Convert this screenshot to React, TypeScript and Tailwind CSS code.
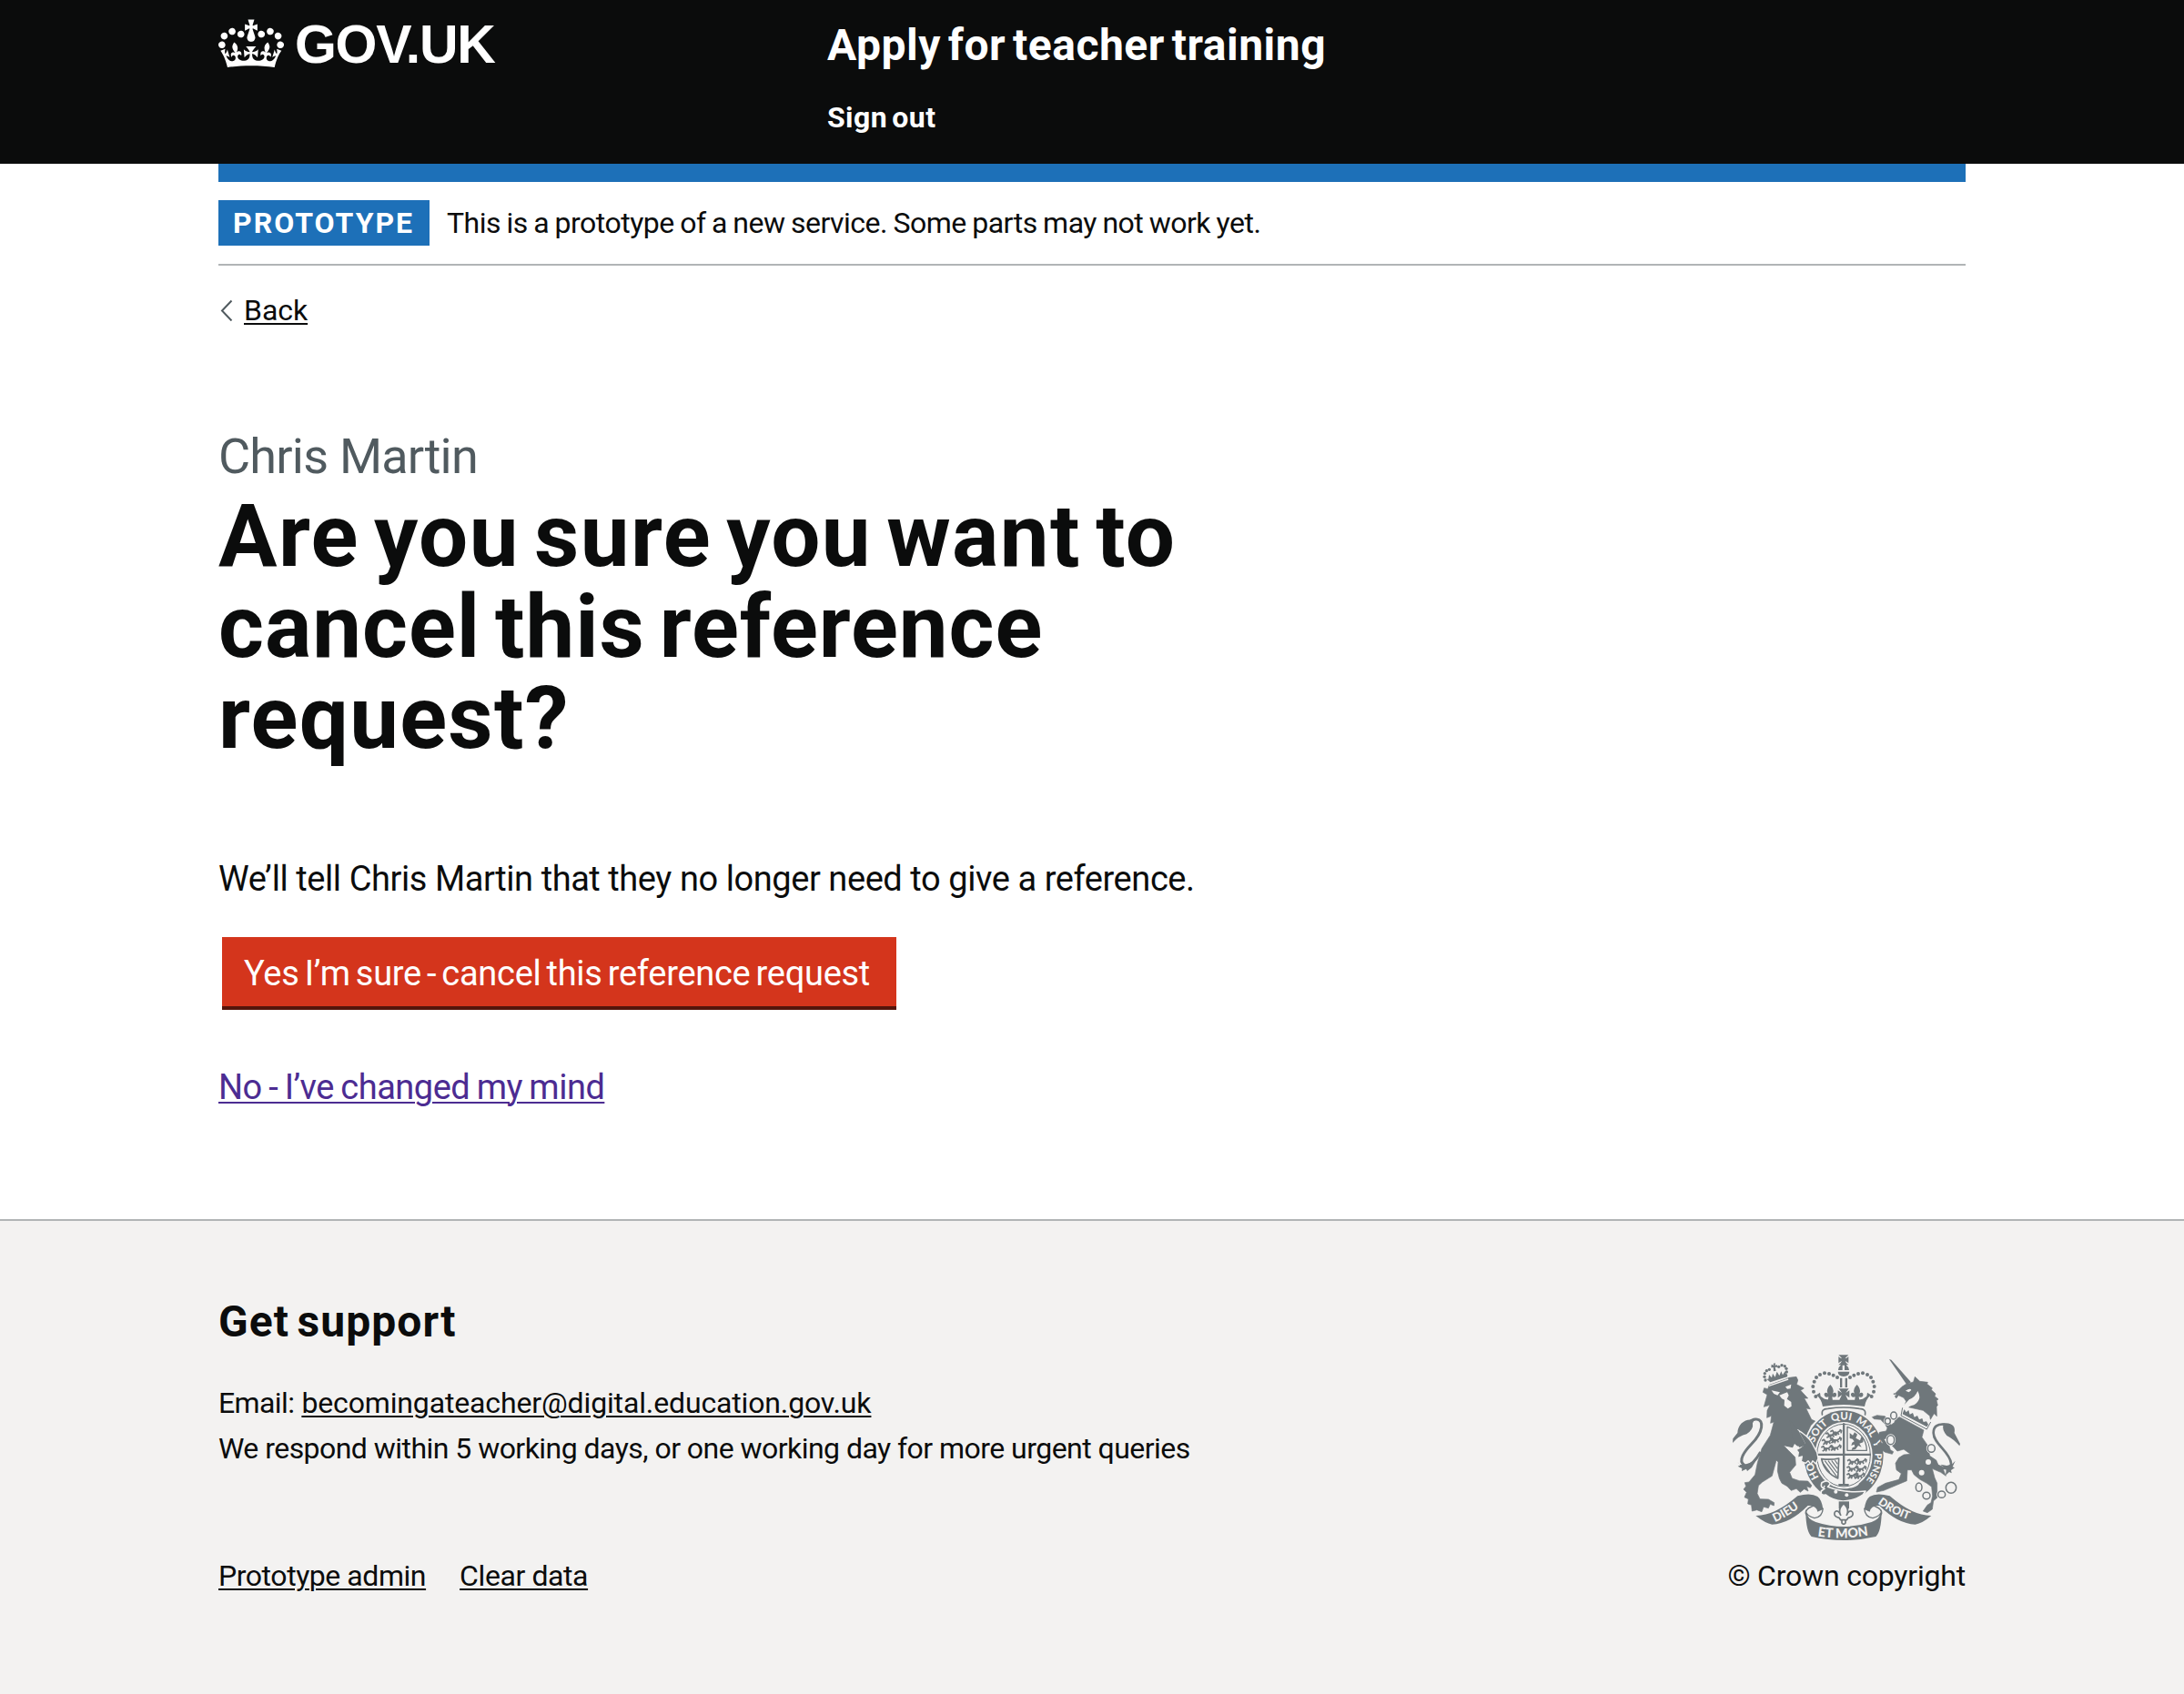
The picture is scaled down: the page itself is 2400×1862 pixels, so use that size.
import type { ReactNode } from "react";

function Crown() {
  return (
    <svg className="block h-[64px] w-[72px] shrink-0" viewBox="0 0 132 97" fill="currentColor" aria-hidden="true">
      <path
        fillRule="evenodd"
        d="M25 30.2c3.5 1.5 7.7-.2 9.1-3.7 1.5-3.6-.2-7.8-3.9-9.2-3.6-1.4-7.6.3-9.1 3.9-1.4 3.5.3 7.5 3.9 9zM9 39.5c3.6 1.5 7.8-.2 9.2-3.7 1.5-3.6-.2-7.8-3.9-9.1-3.6-1.5-7.6.2-9.1 3.8-1.4 3.5.3 7.5 3.8 9zM4.4 57.2c3.5 1.5 7.7-.2 9.1-3.8 1.5-3.6-.2-7.7-3.9-9.1-3.5-1.5-7.6.3-9.1 3.8-1.4 3.5.3 7.6 3.9 9.1zm38.3-21.4c3.5 1.5 7.7-.2 9.1-3.8 1.5-3.6-.2-7.7-3.9-9.1-3.6-1.5-7.6.3-9.1 3.8-1.3 3.6.4 7.7 3.9 9.1zm64.4-5.6c-3.6 1.5-7.8-.2-9.1-3.7-1.5-3.6.2-7.8 3.8-9.2 3.6-1.4 7.7.3 9.2 3.9 1.3 3.5-.4 7.5-3.9 9zm15.9 9.3c-3.6 1.5-7.7-.2-9.1-3.7-1.5-3.6.2-7.8 3.7-9.1 3.6-1.5 7.7.2 9.2 3.8 1.5 3.5-.3 7.5-3.8 9zm4.7 17.7c-3.6 1.5-7.8-.2-9.2-3.8-1.5-3.6.2-7.7 3.9-9.1 3.6-1.5 7.7.3 9.2 3.8 1.3 3.5-.4 7.6-3.9 9.1zM89.3 35.8c-3.6 1.5-7.8-.2-9.2-3.8-1.4-3.6.2-7.7 3.9-9.1 3.6-1.5 7.7.3 9.2 3.8 1.4 3.6-.3 7.7-3.9 9.1zM69.7 17.7l8.9 4.7V9.3l-8.9 2.8c-.2-.3-.5-.6-.9-.9L72.4 0H59.6l3.5 11.2c-.3.3-.6.5-.9.9l-8.8-2.8v13.1l8.8-4.7c.3.3.6.7.9.9l-5 15.4v.1c-.2.8-.4 1.6-.4 2.4 0 4.1 3.1 7.5 7 8.1h.2c.3 0 .7.1 1 .1.4 0 .7 0 1-.1h.2c4-.6 7.1-4.1 7.1-8.1 0-.8-.1-1.7-.4-2.4V34l-5.1-15.4c.4-.2.7-.6 1-.9zM66 92.8c16.9 0 32.8 1.1 47.1 3.2 4-16.9 8.9-26.7 14-33.5l-9.6-3.4c1 4.9 1.1 7.2 0 10.2-1.5-1.4-3-4.3-4.2-8.7L108.6 76c2.8-2 5-3.2 7.5-3.3-4.4 9.4-10 11.9-13.6 11.2-4.3-.8-6.3-4.6-5.6-7.9 1-4.7 5.7-5.9 8-.5 4.3-8.7-3-11.4-7.6-8.8 7.1-7.2 7.9-13.5 2.1-21.1-8 6.1-8.1 12.3-4.5 20.8-4.7-5.4-12.1-2.5-9.5 6.2 3.4-5.2 7.9-2 7.2 3.1-.6 4.3-6.4 7.8-13.5 7.2-10.3-.9-10.9-8-11.2-13.8 2.5-.5 7.1 1.8 11 7.3L80.2 60c-4.1 4.4-8 5.3-12.3 5.4 1.4-4.4 8-11.6 8-11.6H55.5s6.4 7.2 7.9 11.6c-4.2-.1-8-1-12.3-5.4l1.4 16.4c3.9-5.5 8.5-7.7 10.9-7.3-.3 5.8-.9 12.8-11.1 13.8-7.2.6-12.9-2.9-13.5-7.2-.7-5 3.8-8.3 7.1-3.1 2.7-8.7-4.6-11.6-9.4-6.2 3.7-8.5 3.6-14.7-4.6-20.8-5.8 7.6-5 13.9 2.2 21.1-4.7-2.6-11.9.1-7.7 8.8 2.3-5.5 7.1-4.2 8.1.5.7 3.3-1.3 7.1-5.7 7.9-3.5.7-9-1.8-13.5-11.2 2.5.1 4.7 1.3 7.5 3.3l-4.7-15.4c-1.2 4.4-2.7 7.2-4.3 8.7-1.1-3-.9-5.3 0-10.2l-9.5 3.4c5 6.9 9.9 16.7 14 33.5 14.8-2.1 30.8-3.2 47.7-3.2z"
      />
    </svg>
  );
}

const INK = "#6f777b";
const PAPER = "#f3f2f1";

const crownPearls: [number, number][] = [
  [316, 162], [309, 146], [307, 129], [311, 113], [318, 99], [330, 90], [345, 85], [360, 87], [374, 92], [387, 99],
  [500, 162], [507, 146], [509, 129], [505, 113], [498, 99], [486, 90], [471, 85], [456, 87], [442, 92], [429, 99],
];

const lionPearls: [number, number][] = [
  [150, 108], [147, 97], [148, 86], [154, 77], [163, 73], [194, 64], [204, 59], [214, 62], [219, 70], [220, 81], [218, 92],
];

const chainLinks: [number, number, number, number][] = [
  [573, 225, 10, 12], [553, 243, 9, 10], [563, 305, 12, 15], [697, 333, 12, 13],
  [656, 461, 10, 14], [681, 489, 12, 11], [731, 485, 12, 11], [762, 463, 17, 18],
];

const shieldLions: [number, number][] = [
  [346, 280], [334, 302], [332, 324], [362, 272], [361, 297], [360, 322],
  [418, 368], [416, 391], [416, 414], [444, 368], [443, 392], [438, 415],
];

/* A passant lion of the first and fourth quarters, placed by its top-left corner. */
function SmallLion({ x, y }: { x: number; y: number }) {
  return (
    <path
      transform={`translate(${x} ${y})`}
      fill="none"
      stroke={INK}
      strokeWidth="5"
      d="M2 6l7-4 4 6 12 1 8-5 3-6M11 9l2 5-7 4M14 12l12-3 4 7M20 12l-3 7M32 2l7 1-2 8"
    />
  );
}

function Crest() {
  return (
    <svg className="block h-[204px] w-[250px]" viewBox="42 24 750 612" fill={INK} strokeLinejoin="round" aria-hidden="true">
      <defs>
        <path id="garter" d="M408 474A103 118 0 0 1 408 238A103 118 0 0 1 408 474" />
        <path id="dieu" d="M182 576Q232 555 288 508" />
        <path id="etmon" d="M322 622Q408 636 500 618" />
        <path id="droit" d="M520 514Q580 560 650 576" />
      </defs>

      {/* Lion crown */}
      {lionPearls.map(([cx, cy]) => (
        <circle key={`${cx}-${cy}`} cx={cx} cy={cy} r="5" />
      ))}
      <path d="M170 56l8 3-2-6 7-1-1 7 7-1 1 7-8 0 3 12-8 2-1-13-7 1zM154 104l6 0 2-14 9 10 3-14 8 12 6-18 8 13 6-14 5 12 8-12 7 18-56 18z" />

      {/* Lion */}
      <path
        stroke={INK}
        strokeWidth="2"
        d="M163 124L219 104 228 100 252 97 257 108 253 122 277 135 266 142 290 168 278 168 298 203 284 201 302 238 314 243 299 258 287 290 270 330 240 332 211 325 226 340 248 362 250 388 230 412 238 432 262 440 290 441 303 455 298 463 286 458 291 474 278 467 265 478 252 466 235 472 222 458 204 448 196 432 190 408 192 378 186 372 172 424 140 444 127 456 123 482 132 500 160 501 179 512 178 522 166 517 160 530 144 526 138 542 122 536 106 540 104 520 92 516 94 500 81 494 88 478 78 468 86 458 82 446 96 444 116 420 124 380 138 334 166 290 178 246 167 250 170 226 155 232 156 208 165 190 145 196 156 156 142 148 146 134 158 137z"
      />
      <path fill={PAPER} d="M211 325L240 331 246 318 256 326 277 312 280 340 262 336 255 350 238 340z" />
      <path fill={PAPER} d="M170 142L198 148 190 158 178 153zM216 130L235 122 233 136 222 137zM196 158L222 148 227 158 221 170 235 180 236 194 224 202 212 192 213 173 204 169zM161 125L225 103 226 107 162 129z" />

      {/* Lion tail */}
      <path fill="none" stroke={INK} strokeWidth="9" d="M134 345Q105 396 80 388C58 374 82 342 104 319C144 277 146 239 121 237Q108 235 98 246" />
      <path d="M113 240C85 232 59 252 58 282L43 301 42 315Q63 291 88 286Q112 270 108 250zM57 376l8 11 24-1 31-15-15 25-15 12-3-7-15 7 1-9-14-7 8-3z" />

      {/* Royal crown */}
      <path d="M391 25h33q-9 8-11 12 6-2 11-7v22q-5-5-11-7 2 7 11 13h-33q9-6 11-13-6 2-11 7V30q5 5 11 7-2-4-11-12zM404 59h7v16h15q0-10-9-16v-1h-18q-9 7-9 17h14zM389 80h38q0 14-19 16-19-2-19-16zM396 101h7v31h-7zM413 101h7v31h-7z" />
      {crownPearls.map(([cx, cy]) => (
        <circle key={`${cx}-${cy}`} cx={cx} cy={cy} r="6" />
      ))}
      <path d="M392 136h33l-10 14 12-8v24l-13-9 8 16h-28l8-16-13 9v-24l13 8zM364 123q15 16 8 29 8-6 12 1 2 14-14 10l2 13h-16l2-13q-15 4-14-10 5-7 12-1-8-13 8-29zM452 123q15 16 8 29 8-6 12 1 2 14-14 10l2 13h-16l2-13q-15 4-14-10 5-7 12-1-8-13 8-29zM318 157l12-8 2 12 13 9q22 5 63 3 41 2 63-3l13-9 2-12 12 8q-17 14-21 38-69-12-138 0-4-24-21-38z" />
      <path fill="none" stroke={INK} strokeWidth="5" d="M338 224q-6-22 18-22 52-8 104 0 24 0 18 22" />

      {/* Garter */}
      <ellipse cx="408" cy="356" rx="136" ry="153" fill={PAPER} />
      <ellipse cx="408" cy="356" rx="131" ry="148" />
      <ellipse cx="408" cy="356" rx="95" ry="110" fill={PAPER} />
      <ellipse cx="408" cy="356" rx="88" ry="103" fill="none" stroke={INK} strokeWidth="3" />
      <g fill={PAPER} fontFamily="Lato, sans-serif" fontWeight="900" fontSize="34" textAnchor="middle">
        <text><textPath href="#garter" startOffset="124">HO</textPath></text>
        <text><textPath href="#garter" startOffset="254">SOIT</textPath></text>
        <text><textPath href="#garter" startOffset="340">QUI</textPath></text>
        <text><textPath href="#garter" startOffset="424">MAL</textPath></text>
        <text><textPath href="#garter" startOffset="486">Y</textPath></text>
        <text fontSize="31"><textPath href="#garter" startOffset="562">PENSE</textPath></text>
      </g>

      {/* Shield quarters */}
      <path d="M405 250h7v200h13v7h-34v-7h14zM318 350h180v7H318z" />
      {shieldLions.map(([x, y]) => (
        <SmallLion key={`${x}-${y}`} x={x} y={y} />
      ))}
      <path fill="none" stroke={INK} strokeWidth="4" d="M420 262v78h64q0-54-64-78z" />
      <path d="M428 282l10 8 6-10 9 7-5 12 14 8 4-12 8 4-2 14-12 4 7 12-11-5-9 12-13 3 3-8 8-3-2-8-10 4 3-10 7-4-6-8-9-2z" />
      <path fill="none" stroke={INK} strokeWidth="5" d="M335 368q32 4 57-2l-3 66q-45-20-54-64z" />
      <path fill="none" stroke={INK} strokeWidth="3.5" d="M346 374l40 53M357 374l30 40M368 373l20 27M379 372l9 13M342 384l20 28" />

      {/* Buckle and strap */}
      <path
        stroke={PAPER}
        strokeWidth="5"
        d="M336 446q20-12 28 4l-8 10q56 22 124 14l-8 12q-28 20-66 21-36-2-58-21-17 4-14-12l10-8q-14-4-8-20z"
      />
      <path fill="none" stroke={PAPER} strokeWidth="4" d="M346 456q-8 8 0 12M430 462q18-2 28-14" />
      <circle cx="382" cy="476" r="6" fill={PAPER} />
      <circle cx="418" cy="487" r="6" fill={PAPER} />

      {/* Lion foreleg resting on the garter */}
      <path
        stroke={PAPER}
        strokeWidth="4"
        d="M256 272Q290 292 304 316L320 346 324 366 316 384 306 374 300 386 291 374 283 382 268 376 271 360 256 364 259 346 252 338 268 328 280 318z"
      />
      <path d="M230 240L260 276 284 322 262 330 240 300z" />

      {/* Unicorn */}
      <path d="M558 39l7 2 65 74-14 8z" />
      <path stroke={INK} strokeWidth="2" d="M574 156l26-26 12-8 26-8 5-17 16 15 26 3-2 6 17 13-3 6 14 13-3 8 12 10-6 4 4 16-4 4 1 32-9-9-12 20-2-12-22-18-62-14 6-16-8-12-17-8-8 10-4-8 8-4-12-4z" />
      <path fill={PAPER} d="M612 143q16-10 19-2l-8 7zM610 200l-8-4 22-24q20-8 28-28 16 28-12 46-18 4-24 14z" />
      <path fill={PAPER} d="M596 196l-6 32 90 50 18-34-12-12-62-28z" />
      <path fill="none" stroke={INK} strokeWidth="3" d="M602 199l-5 26 85 45 13-24" />
      <path d="M604 214l4-10 6 10 8-7 4 14 10-5 5 14 10-5 6 13 10-4 4 12 10-2 6 10-5 8-80-42z" />
      <path
        stroke={INK}
        strokeWidth="2"
        d="M593 230L672 273 666 296 684 322 692 358 713 372 720 388 732 392 745 424 728 412 700 400 708 430 716 448 716 496 704 506 700 534 684 545 670 540 684 520 696 512 701 490 698 460 682 448 660 436 640 420 632 404 618 404 616 440 540 472 516 477 520 462 546 448 590 436 598 416 582 404 579 382 590 364 606 354 628 352 606 336 585 342 566 322 550 300 540 303 558 325 562 338 572 344 568 352 545 346 522 330 520 318 538 316 522 292 526 280 548 276 552 266 545 254 530 238 508 236 502 230 518 224 544 227 556 242 564 256 575 248 580 234z"
      />
      <circle cx="687" cy="378" r="9" fill={PAPER} />
      <circle cx="665" cy="413" r="9" fill={PAPER} />
      {chainLinks.map(([cx, cy, rx, ry]) => (
        <g key={`${cx}-${cy}`}>
          <ellipse cx={cx} cy={cy} rx={rx} ry={ry} fill={PAPER} stroke={PAPER} strokeWidth="9" />
          <ellipse cx={cx} cy={cy} rx={rx} ry={ry} fill="none" stroke={INK} strokeWidth="4.5" />
        </g>
      ))}

      {/* Unicorn tail */}
      <path fill="none" stroke={INK} strokeWidth="8" d="M708 372C712 404 766 408 762 382C758 344 704 318 704 282Q704 250 742 254" />
      <path d="M728 252C766 244 778 262 773 282L792 318 790 325Q770 302 748 291Q732 272 736 258zM776 374l-10 11-18 5-20-4 18 18-2 18 12-11 8 4-2-10 12-8-7-3z" />

      {/* Ribbon */}
      <path d="M118 555Q180 556 256 490Q300 478 322 492Q336 502 340 534L322 542Q318 520 290 522Q230 582 172 584Q150 580 118 555zM697 555Q636 556 560 490Q516 478 494 492Q480 502 476 534L494 542Q498 520 526 522Q586 582 644 584Q668 580 697 555z" />
      <path fill="none" stroke={INK} strokeWidth="4" d="M322 519Q280 528 283 548L296 572M340 530Q338 560 312 563Q286 556 283 540M494 519Q536 528 533 548L520 572M476 530Q478 560 504 563Q530 556 533 540" />
      <path d="M283 545Q290 566 316 576Q408 606 500 576Q526 566 533 545Q532 606 514 624Q408 648 302 624Q284 606 283 545z" />
      <g fill={PAPER} fontFamily="Lato, sans-serif" fontWeight="900" fontSize="39">
        <text><textPath href="#dieu">DIEU</textPath></text>
        <text fontSize="43"><textPath href="#etmon">ET MON</textPath></text>
        <text fontSize="37"><textPath href="#droit">DROIT</textPath></text>
      </g>

      {/* Pendant */}
      <path d="M392 508h34v24h-34z" />
      <path fill={PAPER} stroke={INK} strokeWidth="5" d="M408 515q20 18 10 38 8-20 19-10 6 14-14 19l-5 7h-20l-5-7q-20-5-14-19 11-10 19 10-10-20 10-38zM402 569h12v10q-6 8-12 0z" />
    </svg>
  );
}

function TextLink({ children, className }: { children: ReactNode; className: string }) {
  return (
    <a href="#" className={`underline decoration-2 underline-offset-[3px] ${className}`}>
      {children}
    </a>
  );
}

export default function App() {
  return (
    <div className="flex min-h-[1862px] flex-col bg-white font-[Roboto,sans-serif] text-[#0b0c0c]">
      <header className="h-[180px] bg-[#0b0c0c] text-white">
        <div className="mx-auto flex w-[1920px]">
          <a href="#" className="flex w-[669px] items-start gap-3 pt-4">
            <Crown />
            <span className="font-['Liberation_Sans',sans-serif] text-[59px] leading-[66px] font-bold tracking-[-1.3px]">GOV.UK</span>
          </a>
          <div className="flex flex-col pt-5">
            <a href="#" className="text-[48px] leading-[60px] font-bold tracking-[0.5px] [word-spacing:-4.5px]">Apply for teacher training</a>
            <a href="#" className="mt-[29px] text-[32px] leading-10 font-bold tracking-[0.4px] [word-spacing:-3px]">Sign out</a>
          </div>
        </div>
      </header>

      <div className="mx-auto w-[1920px]">
        <div className="h-5 bg-[#1d70b8]" />
        <div className="flex h-[92px] items-center gap-[19px] border-b-2 border-[#b1b4b6] text-[32px]">
          <strong className="h-[50px] w-[232px] bg-[#1d70b8] pl-4 leading-[50px] font-bold tracking-[2px] text-white">PROTOTYPE</strong>
          <span className="tracking-[-0.5px] [word-spacing:-1px]">This is a prototype of a new service. Some parts may not work yet.</span>
        </div>
        <div className="flex items-center pt-[29px] text-[32px] leading-10">
          <svg className="mr-3 ml-0.5 block h-6 w-[14px]" viewBox="0 0 14 24" fill="none" stroke="#505a5f" strokeWidth="2" aria-hidden="true">
            <path d="M12.5 1.5L2 12.5L12.5 23.5" />
          </svg>
          <TextLink className="tracking-[-0.05px]">Back</TextLink>
        </div>
      </div>

      <main className="mx-auto w-[1920px] pt-[111px]">
        <span className="block text-[54px] leading-[60px] tracking-[-0.78px] text-[#505a5f]">Chris Martin</span>
        <h1 className="mt-[7px] text-[96px] leading-[100px] font-bold [word-spacing:-9px]">
          <span className="block tracking-[1.4px]">Are you sure you want to</span>
          <span className="block tracking-[0.96px]">cancel this reference</span>
          <span className="block tracking-[1.3px]">request?</span>
        </h1>
        <p className="mt-[102px] text-[38px] leading-[50px] tracking-[-0.43px]">
          We’ll tell Chris Martin that they no longer need to give a reference.
        </p>
        <button className="mt-[39px] ml-1 block h-[76px] w-[741px] bg-[#d4351c] pt-1 pl-6 text-left text-[38px] leading-[72px] tracking-[-0.29px] [word-spacing:-3px] whitespace-nowrap text-white shadow-[0_4px_0_#55150b]">
          Yes I’m sure - cancel this reference request
        </button>
        <p className="mt-16 text-[38px] leading-[50px]">
          <TextLink className="tracking-[-0.5px] [word-spacing:-1.5px] text-[#4c2c92]">No - I’ve changed my mind</TextLink>
        </p>
      </main>

      <footer className="mt-[120px] flex-1 border-t-2 border-[#b1b4b6] bg-[#f3f2f1]">
        <div className="mx-auto flex h-[410px] w-[1920px] items-end justify-between text-[32px]">
          <div>
            <h2 className="text-[48px] leading-[60px] font-bold tracking-[1.05px] [word-spacing:-4.5px]">Get support</h2>
            <ul className="mt-[34px] leading-[50px]">
              <li>
                <span className="mr-2 tracking-[-0.6px]">Email:</span>
                <TextLink className="tracking-[-0.14px]">becomingateacher@digital.education.gov.uk</TextLink>
              </li>
              <li className="tracking-[-0.54px]">We respond within 5 working days, or one working day for more urgent queries</li>
            </ul>
            <div className="mt-[95px] flex gap-[37px] leading-10">
              <TextLink className="tracking-[-0.45px]">Prototype admin</TextLink>
              <TextLink className="tracking-[-0.41px]">Clear data</TextLink>
            </div>
          </div>
          <div className="flex flex-col items-end">
            <div className="mr-[6px] mb-[19px]">
              <Crest />
            </div>
            <a href="#" className="leading-10 tracking-[-0.2px]">© Crown copyright</a>
          </div>
        </div>
      </footer>
    </div>
  );
}
